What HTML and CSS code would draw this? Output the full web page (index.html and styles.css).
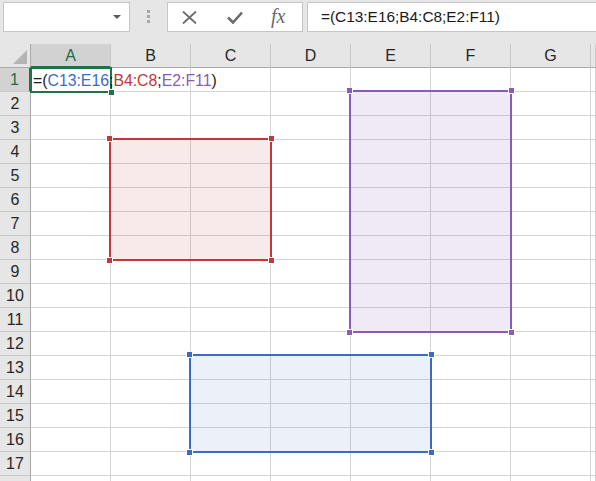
FILE: index.html
```html
<!DOCTYPE html>
<html>
<head>
<meta charset="utf-8">
<link rel="stylesheet" href="styles.css">
</head>
<body>
<div class="topbar">
  <div class="namebox"><span class="caret"></span></div>
  <div class="grip"><i></i><i></i><i></i></div>
  <div class="fxbox">
    <svg class="ico-x" width="15" height="13" viewBox="0 0 15 13"><path d="M1 0.5 L14 12.5 M14 0.5 L1 12.5" /></svg>
    <svg class="ico-check" width="16" height="13" viewBox="0 0 16 13"><path d="M1 6.5 L6 11.5 L15 1.5" /></svg>
    <span class="fx">fx</span>
  </div>
  <div class="formula">=(C13:E16;B4:C8;E2:F11)</div>
</div>
<div class="sheet">
  <div class="grid">
    <div class="corner"><span class="tri"></span></div>
    <div class="colhead sel">A</div>
    <div class="colhead">B</div>
    <div class="colhead">C</div>
    <div class="colhead">D</div>
    <div class="colhead">E</div>
    <div class="colhead">F</div>
    <div class="colhead">G</div>
    <div class="colhead"></div>

    <div class="rowhead sel">1</div><div class="cell"><span class="ftext">=(<span class="c-blue">C13:E16</span>;<span class="c-red">B4:C8</span>;<span class="c-purple">E2:F11</span>)</span></div><div class="cell"></div><div class="cell"></div><div class="cell"></div><div class="cell"></div><div class="cell"></div><div class="cell"></div><div class="cell"></div>
    <div class="rowhead">2</div><div class="cell"></div><div class="cell"></div><div class="cell"></div><div class="cell"></div><div class="cell"></div><div class="cell"></div><div class="cell"></div><div class="cell"></div>
    <div class="rowhead">3</div><div class="cell"></div><div class="cell"></div><div class="cell"></div><div class="cell"></div><div class="cell"></div><div class="cell"></div><div class="cell"></div><div class="cell"></div>
    <div class="rowhead">4</div><div class="cell"></div><div class="cell"></div><div class="cell"></div><div class="cell"></div><div class="cell"></div><div class="cell"></div><div class="cell"></div><div class="cell"></div>
    <div class="rowhead">5</div><div class="cell"></div><div class="cell"></div><div class="cell"></div><div class="cell"></div><div class="cell"></div><div class="cell"></div><div class="cell"></div><div class="cell"></div>
    <div class="rowhead">6</div><div class="cell"></div><div class="cell"></div><div class="cell"></div><div class="cell"></div><div class="cell"></div><div class="cell"></div><div class="cell"></div><div class="cell"></div>
    <div class="rowhead">7</div><div class="cell"></div><div class="cell"></div><div class="cell"></div><div class="cell"></div><div class="cell"></div><div class="cell"></div><div class="cell"></div><div class="cell"></div>
    <div class="rowhead">8</div><div class="cell"></div><div class="cell"></div><div class="cell"></div><div class="cell"></div><div class="cell"></div><div class="cell"></div><div class="cell"></div><div class="cell"></div>
    <div class="rowhead">9</div><div class="cell"></div><div class="cell"></div><div class="cell"></div><div class="cell"></div><div class="cell"></div><div class="cell"></div><div class="cell"></div><div class="cell"></div>
    <div class="rowhead">10</div><div class="cell"></div><div class="cell"></div><div class="cell"></div><div class="cell"></div><div class="cell"></div><div class="cell"></div><div class="cell"></div><div class="cell"></div>
    <div class="rowhead">11</div><div class="cell"></div><div class="cell"></div><div class="cell"></div><div class="cell"></div><div class="cell"></div><div class="cell"></div><div class="cell"></div><div class="cell"></div>
    <div class="rowhead">12</div><div class="cell"></div><div class="cell"></div><div class="cell"></div><div class="cell"></div><div class="cell"></div><div class="cell"></div><div class="cell"></div><div class="cell"></div>
    <div class="rowhead">13</div><div class="cell"></div><div class="cell"></div><div class="cell"></div><div class="cell"></div><div class="cell"></div><div class="cell"></div><div class="cell"></div><div class="cell"></div>
    <div class="rowhead">14</div><div class="cell"></div><div class="cell"></div><div class="cell"></div><div class="cell"></div><div class="cell"></div><div class="cell"></div><div class="cell"></div><div class="cell"></div>
    <div class="rowhead">15</div><div class="cell"></div><div class="cell"></div><div class="cell"></div><div class="cell"></div><div class="cell"></div><div class="cell"></div><div class="cell"></div><div class="cell"></div>
    <div class="rowhead">16</div><div class="cell"></div><div class="cell"></div><div class="cell"></div><div class="cell"></div><div class="cell"></div><div class="cell"></div><div class="cell"></div><div class="cell"></div>
    <div class="rowhead">17</div><div class="cell"></div><div class="cell"></div><div class="cell"></div><div class="cell"></div><div class="cell"></div><div class="cell"></div><div class="cell"></div><div class="cell"></div>
    <div class="rowhead"></div><div class="cell"></div><div class="cell"></div><div class="cell"></div><div class="cell"></div><div class="cell"></div><div class="cell"></div><div class="cell"></div><div class="cell"></div>
  </div>

  <div class="range r-red"><i class="h tl"></i><i class="h tr"></i><i class="h bl"></i><i class="h br"></i></div>
  <div class="range r-purple"><i class="h tl"></i><i class="h tr"></i><i class="h bl"></i><i class="h br"></i></div>
  <div class="range r-blue"><i class="h tl"></i><i class="h tr"></i><i class="h bl"></i><i class="h br"></i></div>
  <div class="active"><i class="fill"></i></div>
</div>
</body>
</html>
```
FILE: styles.css
```css
* { box-sizing: border-box; }
html, body {
  margin: 0;
  padding: 0;
  width: 596px;
  height: 481px;
  overflow: hidden;
  background: #ffffff;
  font-family: "Liberation Sans", Arial, sans-serif;
}

.topbar {
  height: 44px;
  background: #e6e6e6;
  display: flex;
  align-items: flex-start;
  padding-top: 2px;
}
.namebox {
  margin-left: 3px;
  width: 127px;
  height: 30px;
  background: #ffffff;
  border: 1px solid #c6c6c6;
  display: flex;
  align-items: center;
  justify-content: flex-end;
  padding-right: 8px;
}
.caret {
  width: 0;
  height: 0;
  border-left: 4px solid transparent;
  border-right: 4px solid transparent;
  border-top: 4px solid #5a5a5a;
}
.grip {
  width: 37px;
  height: 30px;
  display: flex;
  flex-direction: column;
  gap: 2px;
  padding-top: 8px;
  padding-left: 17px;
}
.grip i {
  display: block;
  width: 3px;
  height: 3px;
  background: #a8a8a8;
}
.fxbox {
  width: 136px;
  height: 30px;
  background: #ffffff;
  border: 1px solid #c6c6c6;
  display: flex;
  align-items: center;
  padding-left: 14px;
}
.ico-x path, .ico-check path {
  fill: none;
  stroke: #6a6a6a;
}
.ico-x path { stroke-width: 1.8; }
.ico-check path { stroke-width: 2.6; }
.ico-x { margin-right: 30px; }
.ico-check { margin-right: 28px; }
.fx {
  font-family: "Liberation Serif", "Times New Roman", serif;
  font-style: italic;
  font-size: 20px;
  color: #6a6a6a;
  line-height: 1;
  margin-top: -2px;
}
.formula {
  flex: 1;
  margin-left: 4px;
  height: 30px;
  background: #ffffff;
  border: 1px solid #c6c6c6;
  border-right: none;
  padding-left: 13px;
  font-size: 15.4px;
  line-height: 28px;
  color: #1a1a1a;
  white-space: nowrap;
}

.sheet {
  position: relative;
}
.grid {
  display: grid;
  grid-template-columns: 31px repeat(7, 80px) 1fr;
  grid-auto-rows: 24px;
}
.corner {
  position: relative;
  background: #e6e6e6;
  border-right: 1px solid #ababab;
  border-bottom: 1px solid #ababab;
}
.tri {
  position: absolute;
  right: 3px;
  bottom: 3px;
  width: 0;
  height: 0;
  border-left: 14px solid transparent;
  border-bottom: 14px solid #b4b4b4;
}
.colhead {
  background: #e6e6e6;
  border-right: 1px solid #c8c8c8;
  border-bottom: 1px solid #ababab;
  display: flex;
  align-items: center;
  justify-content: center;
  font-size: 16px;
  color: #262626;
  padding-top: 1px;
}
.colhead.sel {
  background: #d2d2d2;
  color: #1e6b41;
  border-bottom: 2px solid #217346;
}
.rowhead {
  background: #e6e6e6;
  border-right: 1px solid #a6a6a6;
  border-bottom: 1px solid #c8c8c8;
  display: flex;
  align-items: center;
  justify-content: center;
  font-size: 16px;
  color: #262626;
  padding-top: 1px;
}
.rowhead.sel {
  background: #d2d2d2;
  color: #1e6b41;
  border-right: 2px solid #217346;
}
.cell {
  border-right: 1px solid #d4d4d4;
  border-bottom: 1px solid #d4d4d4;
  overflow: visible;
  white-space: nowrap;
  position: relative;
}
.ftext {
  position: relative;
  z-index: 3;
  display: block;
  padding-left: 2px;
  font-size: 15.8px;
  line-height: 25px;
  color: #1a1a1a;
}
.c-blue { color: #3a6bc5; }
.c-red { color: #c3363c; }
.c-purple { color: #8a5cb9; }

.range {
  position: absolute;
  border: 2px solid;
}
.r-red {
  left: 109px; top: 94px; width: 163px; height: 123px;
  border-color: #c3363c;
  background: rgba(195, 54, 60, 0.11);
}
.r-purple {
  left: 349px; top: 46px; width: 163px; height: 243px;
  border-color: #8a5cb9;
  background: rgba(138, 92, 185, 0.13);
}
.r-blue {
  left: 189px; top: 310px; width: 243px; height: 99px;
  border-color: #3a6bc5;
  background: rgba(58, 107, 197, 0.1);
}
.h {
  position: absolute;
  width: 7px;
  height: 7px;
  border: 1px solid #ffffff;
}
.r-red .h { background: #c3363c; }
.r-purple .h { background: #8a5cb9; }
.r-blue .h { background: #3a6bc5; }
.tl { left: -5px; top: -5px; }
.tr { right: -5px; top: -5px; }
.bl { left: -5px; bottom: -5px; }
.br { right: -5px; bottom: -5px; }

.active {
  position: absolute;
  left: 30px; top: 23px; width: 82px; height: 26px;
  border: 2px solid #217346;
  z-index: 2;
}
.fill {
  position: absolute;
  right: -5px;
  bottom: -5px;
  width: 7px;
  height: 7px;
  background: #217346;
  border: 1px solid #ffffff;
}
```
